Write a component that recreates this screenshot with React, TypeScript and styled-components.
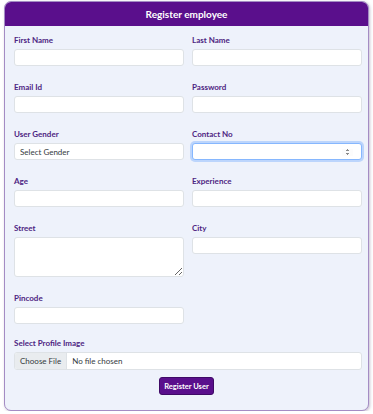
import React from 'react';
import styled, { createGlobalStyle } from 'styled-components';

const GlobalStyle = createGlobalStyle`
    body {
        margin: 0;
        background: #ffffff;
        font-family: Lato, 'Open Sans', sans-serif;
    }
`;

const Card = styled.form`
    box-sizing: border-box;
    width: 365px;
    margin: 1px 0 0 4px;
    background: #eef2fb;
    border: 1px solid #a48cc4;
    border-radius: 7px;
    box-shadow: 1px 1px 3px rgba(90, 70, 120, 0.35);
    overflow: hidden;
    padding-bottom: 15px;
`;

const Header = styled.div`
    height: 24px;
    background: #5a0f8c;
    color: #ffffff;
    font-size: 10px;
    font-weight: 700;
    display: flex;
    align-items: center;
    justify-content: center;
`;

const Grid = styled.div`
    display: grid;
    grid-template-columns: 170px 170px;
    column-gap: 8px;
    row-gap: 16px;
    padding: 9px 0 0 9px;
`;

const Field = styled.div<{ $wide?: boolean }>`
    display: flex;
    flex-direction: column;
    grid-column: ${(p) => (p.$wide ? '1 / span 2' : 'auto')};
    margin-top: ${(p) => (p.$wide ? '-2px' : '0')};
`;

const Label = styled.label`
    font-size: 8px;
    line-height: 10px;
    font-weight: 700;
    color: #4d2482;
    margin-bottom: 4px;
`;

const Input = styled.input<{ $focus?: boolean }>`
    box-sizing: border-box;
    height: 17px;
    width: 100%;
    margin: 0;
    padding: 0 6px;
    background: #ffffff;
    border: 1px solid ${(p) => (p.$focus ? '#86b7fe' : '#dee2e6')};
    border-radius: 3px;
    box-shadow: ${(p) => (p.$focus ? '0 0 0 2px rgba(13, 110, 253, 0.22)' : 'none')};
    font-family: inherit;
    font-size: 8px;
    color: #212529;
    outline: none;

    &::-webkit-inner-spin-button {
        transform: scale(0.7);
    }
`;

const Select = styled.select`
    box-sizing: border-box;
    height: 17px;
    width: 100%;
    margin: 0;
    padding: 0 5px;
    appearance: none;
    background: #ffffff;
    border: 1px solid #dee2e6;
    border-radius: 3px;
    font-family: inherit;
    font-size: 8px;
    color: #343a40;
    outline: none;
`;

const TextArea = styled.textarea`
    box-sizing: border-box;
    height: 40px;
    width: 100%;
    margin: 0;
    padding: 3px 6px;
    background: #ffffff;
    border: 1px solid #dee2e6;
    border-radius: 3px;
    font-family: inherit;
    font-size: 8px;
    outline: none;
`;

const FileInput = styled.input`
    box-sizing: border-box;
    height: 18px;
    width: 348px;
    margin: 0;
    padding: 0;
    background: #ffffff;
    border: 1px solid #dee2e6;
    border-radius: 3px;
    font-family: inherit;
    font-size: 8px;
    color: #343a40;
    overflow: hidden;

    &::file-selector-button {
        height: 18px;
        margin: -1px 5px 0 0;
        padding: 0 5px;
        border: none;
        border-right: 1px solid #dee2e6;
        background: #e9ecef;
        color: #343a40;
        font-family: inherit;
        font-size: 8px;
    }
`;

const Actions = styled.div`
    display: flex;
    justify-content: center;
    padding-top: 7px;
`;

const Button = styled.button`
    box-sizing: border-box;
    height: 18px;
    padding: 0 4px;
    background: #5a0f8c;
    border: 1px solid #3f0a66;
    border-radius: 3px;
    color: #ffffff;
    font-family: inherit;
    font-size: 7.5px;
    font-weight: 700;
`;

export default function App() {
    return (
        <>
            <GlobalStyle />
            <Card onSubmit={(e) => e.preventDefault()}>
                <Header>Register employee</Header>
                <Grid>
                    <Field>
                        <Label>First Name</Label>
                        <Input type="text" />
                    </Field>
                    <Field>
                        <Label>Last Name</Label>
                        <Input type="text" />
                    </Field>
                    <Field>
                        <Label>Email Id</Label>
                        <Input type="email" />
                    </Field>
                    <Field>
                        <Label>Password</Label>
                        <Input type="password" />
                    </Field>
                    <Field>
                        <Label>User Gender</Label>
                        <Select defaultValue="">
                            <option value="">Select Gender</option>
                            <option value="male">Male</option>
                            <option value="female">Female</option>
                        </Select>
                    </Field>
                    <Field>
                        <Label>Contact No</Label>
                        <Input type="number" $focus autoFocus />
                    </Field>
                    <Field>
                        <Label>Age</Label>
                        <Input type="number" />
                    </Field>
                    <Field>
                        <Label>Experience</Label>
                        <Input type="text" />
                    </Field>
                    <Field>
                        <Label>Street</Label>
                        <TextArea />
                    </Field>
                    <Field>
                        <Label>City</Label>
                        <Input type="text" />
                    </Field>
                    <Field>
                        <Label>Pincode</Label>
                        <Input type="number" />
                    </Field>
                    <Field />
                    <Field $wide>
                        <Label>Select Profile Image</Label>
                        <FileInput type="file" />
                    </Field>
                </Grid>
                <Actions>
                    <Button type="submit">Register User</Button>
                </Actions>
            </Card>
        </>
    );
}
